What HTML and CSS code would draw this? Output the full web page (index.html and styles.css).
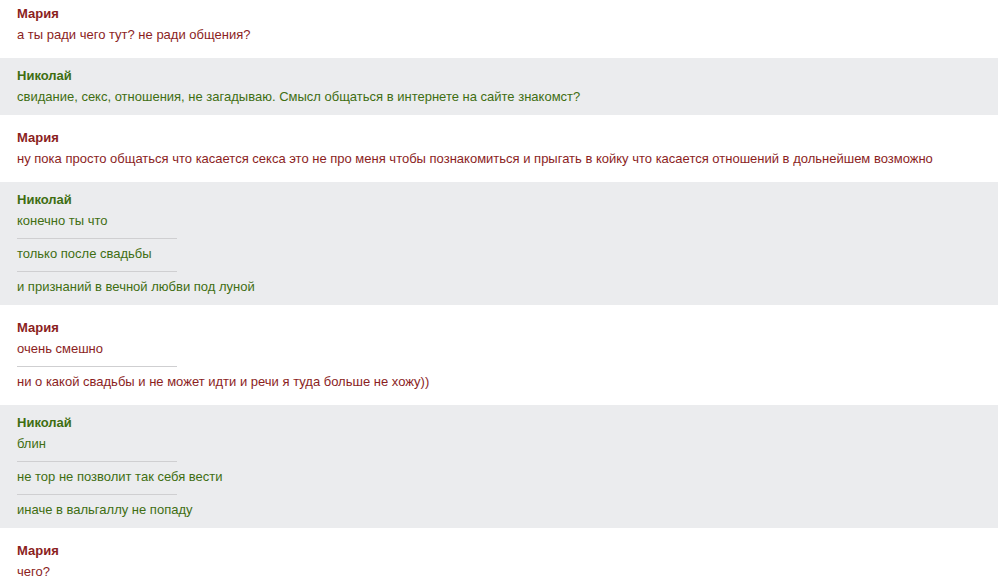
FILE: index.html
```html
<!DOCTYPE html>
<html lang="ru">
<head>
    <meta charset="UTF-8">
    <meta name="viewport" content="width=device-width, initial-scale=1.0">
    <title>Переписка</title>
    <link rel="stylesheet" href="styles.css">
</head>
<body>
    <div class="chat">
        <div class="entry her">
            <div class="name">Мария</div>
            <div class="msg">а ты ради чего тут? не ради общения?</div>
        </div>
        <div class="entry him">
            <div class="name">Николай</div>
            <div class="msg">свидание, секс, отношения, не загадываю. Смысл общаться в интернете на сайте знакомст?</div>
        </div>
        <div class="entry her">
            <div class="name">Мария</div>
            <div class="msg">ну пока просто общаться что касается секса это не про меня чтобы познакомиться и прыгать в койку что касается отношений в дольнейшем возможно</div>
        </div>
        <div class="entry him">
            <div class="name">Николай</div>
            <div class="msg">конечно ты что</div>
            <div class="msg">только после свадьбы</div>
            <div class="msg">и признаний в вечной любви под луной</div>
        </div>
        <div class="entry her">
            <div class="name">Мария</div>
            <div class="msg">очень смешно</div>
            <div class="msg">ни о какой свадьбы и не может идти и речи я туда больше не хожу))</div>
        </div>
        <div class="entry him">
            <div class="name">Николай</div>
            <div class="msg">блин</div>
            <div class="msg">не тор не позволит так себя вести</div>
            <div class="msg">иначе в вальгаллу не попаду</div>
        </div>
        <div class="entry her">
            <div class="name">Мария</div>
            <div class="msg">чего?</div>
        </div>
    </div>
</body>
</html>
```

FILE: styles.css
```css
body {
    margin: 0;
    font-family: Arial, "Liberation Sans", sans-serif;
    font-size: 13px;
    line-height: 16px;
    background: #fff;
}
.chat {
    display: flex;
    flex-direction: column;
    margin-top: -9px;
}
.entry {
    padding: 15px 17px;
}
.entry.him {
    background: #ebecee;
    padding-top: 10px;
    padding-bottom: 10px;
}
.her {
    color: #8b1e1e;
}
.him {
    color: #3f6e12;
}
.name {
    font-weight: bold;
}
.msg {
    margin-top: 5px;
}
.msg + .msg {
    margin-top: 9px;
    padding-top: 8px;
    position: relative;
}
.msg + .msg::before {
    content: "";
    position: absolute;
    top: 0;
    left: 0;
    width: 160px;
    border-top: 1px solid #cfcfd1;
}
```
